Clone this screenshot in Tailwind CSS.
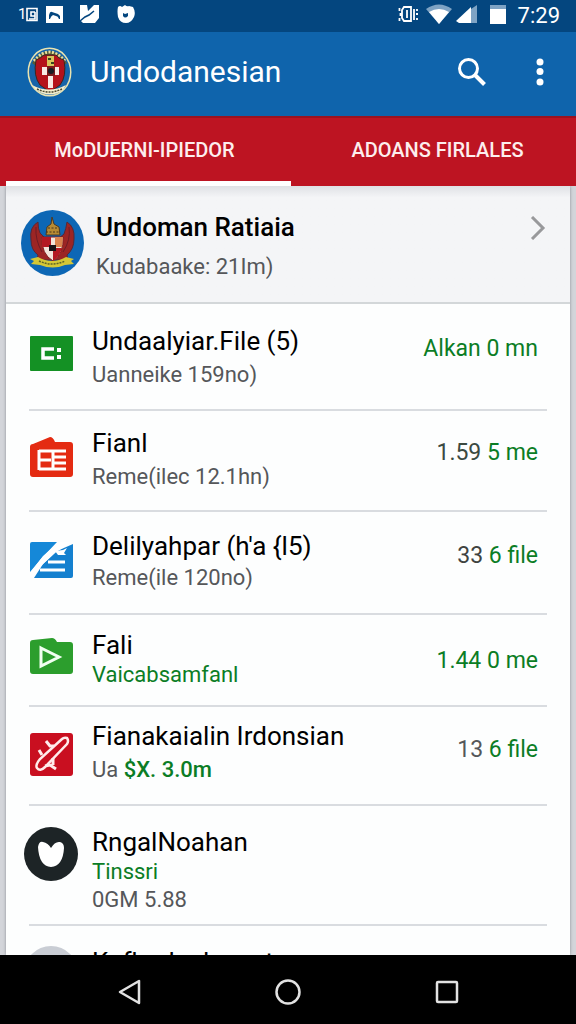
<!DOCTYPE html>
<html lang="id">
<head>
<meta charset="utf-8">
<meta name="viewport" content="width=device-width, initial-scale=1">
<title>Undodanesian</title>
<script src="https://cdn.jsdelivr.net/npm/@tailwindcss/browser@4"></script>
</head>
<body class="flex h-screen flex-col overflow-hidden bg-[#d3d5da] font-[Roboto,'Liberation_Sans',sans-serif] text-black">

<!-- Status bar -->
<div class="flex h-8 shrink-0 items-center bg-[#04467f] pr-4 pb-1 pl-[18px] text-white">
  <div class="flex flex-1 items-center">
    <span class="text-[15px] leading-5">1</span>
    <svg class="h-5 w-3" viewBox="0 0 12 20" fill="none" stroke="#fff" stroke-width="1.6"><path d="M11 4.500H1v12h10z"/><path d="M9 8H5v4h4v3H3M9 8v7"/></svg>
    <svg class="ml-2 h-5 w-[17px]" viewBox="0 0 17 20"><path fill="#fff" d="M0 2h17v17H0z"/><path fill="#04467f" d="M3 15v-4q1-4 3-3l6 2 2 2v3h-1q-1-3-3-3l-3-1q-2 1-3 4z"/></svg>
    <svg class="ml-4 h-5 w-5" viewBox="0 0 20 20"><path fill="#fff" d="M1 1h7l1 6 6-6h5v13l-4 5H4l-3-3z"/><path d="M1 17l5-4 4-2 5-4" stroke="#04467f" stroke-width="1.6" fill="none"/></svg>
    <svg class="ml-[18px] h-5 w-[18px]" viewBox="0 0 18 20"><path fill="#fff" d="M1 3q2-2 4 0l3-2q2 2 4 1l4 1q3 5 1 10-3 6-8 6-6 0-8-6-1-6 0-10z"/><path fill="#04467f" d="M6 9l2 1 3-1v3q-3 3-5 0z"/></svg>
  </div>
  <svg class="h-5 w-5" viewBox="0 0 20 20" fill="none" stroke="#fff" stroke-width="1.8"><path d="M6 3h7v14H6l-2-3V6zM9 6v8M1.500 4v3M2.500 9v3M1.500 14v3M16 5v11M19 5v2M18 10h2M19 14v2"/></svg>
  <svg class="ml-2 h-5 w-[26px]" viewBox="0 0 26 20"><path fill="#7fa3c4" d="M0 5q13-9 26 0L13 20z"/><path fill="#fff" d="M3 8q10-6 20 0L13 20z"/></svg>
  <svg class="ml-1 h-5 w-[22px]" viewBox="0 0 22 20"><path fill="#7fa3c4" d="M15 5l6-4v18h-6z"/><path fill="#fff" d="M0 17L15 3v16H3z"/></svg>
  <svg class="ml-3 h-5 w-4" viewBox="0 0 16 20"><path fill="#7fa3c4" d="M0 1h16v5H0z"/><path fill="#fff" d="M0 5h16v15H0z"/></svg>
  <span class="ml-3 pt-1 text-[22px] leading-6">7:29</span>
</div>

<!-- App bar -->
<header class="flex h-[84px] shrink-0 items-center bg-[#0f64ac] pr-4 pb-1 pl-[27px] text-white">
  <svg class="h-[50px] w-[45px]" viewBox="0 0 45 50">
    <ellipse cx="22.500" cy="25" rx="22" ry="24.500" fill="#e9e3b0"/>
    <ellipse cx="22.500" cy="25" rx="20.500" ry="23" fill="#1764a8"/>
    <path d="M5 16Q22-8 40 16l-4 3Q22 4 9 19z" fill="#5a5c35"/>
    <path d="M7 14Q22-4 38 14" fill="none" stroke="#eadf9c" stroke-width="3" stroke-dasharray="2 1.500"/>
    <path d="M9 13q5-2 8-5h12q3 4 8 5 3 16-4 25l-10 7-10-7Q6 29 9 13z" fill="#b5121b" stroke="#3c2620"/>
    <path d="M20 9h7v10h-7z" fill="#d8c45c"/><path d="M21 11h3v2h-3zm3 4h3v2h-3z" fill="#36451e"/>
    <path d="M21 28h5v13h-5z" fill="#f8e9e4"/>
    <path d="M15 20h17v8H15z" fill="#f8e9e4"/>
    <path d="M20 19h8v10h-8z" fill="#7a1a1c"/><circle cx="24" cy="24" r="3" fill="#171a22"/>
    <path d="M5 38q17 9 34 0l-3 5q-13 9-27 0z" fill="#f5efcf"/><path d="M10 42q12 6 25 0" fill="none" stroke="#4b4a32" stroke-width="1.500" stroke-dasharray="2 1"/>
  </svg>
  <h1 class="ml-[18px] flex-1 text-[30px] leading-10">Undodanesian</h1>
  <button type="button" aria-label="Search" class="flex h-12 w-12 items-center justify-center">
    <svg class="h-7 w-7" viewBox="0 0 28 28" fill="none" stroke="#fff" stroke-width="3"><circle cx="10.500" cy="10.500" r="9"/><path d="M17 17l9.500 9.500" stroke-width="4"/></svg>
  </button>
  <button type="button" aria-label="More options" class="ml-6 flex h-12 w-10 items-center justify-center">
    <svg class="h-7 w-2" viewBox="0 0 8 28" fill="#fff"><circle cx="4" cy="4" r="3.500"/><circle cx="4" cy="13.500" r="3.500"/><circle cx="4" cy="24" r="3.500"/></svg>
  </button>
</header>

<!-- Tabs -->
<nav role="tablist" class="relative z-10 flex h-[70px] shrink-0 border-t-2 border-[#9b1220] bg-[#bd1422] pl-[6px] text-xl font-medium text-[#fdeeee]">
  <button type="button" role="tab" aria-selected="true" class="flex-1 border-b-5 border-white pr-2">MoDUERNI-IPIEDOR</button>
  <button type="button" role="tab" aria-selected="false" class="flex-1 border-b-5 border-transparent pl-2">ADOANS FIRLALES</button>
</nav>

<!-- File list -->
<main class="mx-[6px] min-h-0 flex-1 overflow-hidden bg-[#fdfefe] shadow-[0_0_3px_#8a8d94]">
  <a href="#profile" class="flex h-[118px] items-start border-b-2 border-[#d3d7d9] bg-[#f4f5f7] bg-linear-to-b from-[#dfe1e5] to-[#f4f5f7] to-10% pr-6 pl-[15px]">
    <svg class="mt-6 h-[66px] w-[63px] shrink-0" viewBox="0 0 63 66">
      <ellipse cx="31.500" cy="33" rx="31.500" ry="33" fill="#0d67b5"/>
      <path d="M17 12q-9 5-7 18 0 10 7 15l-1 5h31l-1-5q7-6 7-16 1-12-7-17-1 7-3 12l-6 5H25l-6-6q-2-4-2-11z" fill="#9c2524" stroke="#582836"/>
      <path d="M15 17q-1 13 6 25M48 17q2 13-6 25" fill="none" stroke="#6d1b24"/>
      <path d="M25 25l1-8 4-3 1-7 2 7 5 3 1 8z" fill="#b88b32" stroke="#4d3820"/><path d="M25 22h14M27 18h10" stroke="#49351c" stroke-dasharray="2 1.500"/>
      <path d="M21 27h21q1 17-10 24-12-7-11-24z" fill="#f2e5da" stroke="#7c1b1b"/>
      <path d="M21 27h9v10H21zM32 38h9q-2 8-9 13z" fill="#b31922"/><path d="M34 27h8l-1 10h-7z" fill="#d9834e"/><path d="M28 35h7v6h-7z" fill="#181316"/>
      <path d="M9 49l8-2q14 8 28 0l8 2-3 2 3 3-9 1q-12 5-25 0l-9-1 3-3z" fill="#d5c735"/><path d="M18 51q13 6 26 0" fill="none" stroke="#5d6429" stroke-width="1.500" stroke-dasharray="2 1"/>
    </svg>
    <div class="ml-3 flex-1 pt-[25px]">
      <h2 class="text-[26px] leading-8 font-medium">Undoman Ratiaia</h2>
      <p class="pt-2 text-[22px] leading-8 text-[#55575a]">Kudabaake: 21Im)</p>
    </div>
    <svg class="mt-[30px] h-6 w-4" viewBox="0 0 16 24" fill="none" stroke="#98999b" stroke-width="3"><path d="M2 1l11 11L2 23"/></svg>
  </a>

  <ul class="px-[23px] text-[22px] text-[#55575a]">
    <li class="flex h-[107px] items-start border-b-2 border-[#d9dce0] pt-[21px] pr-[9px]">
      <svg class="mt-2 h-11 w-11 shrink-0" viewBox="0 0 44 44"><rect x="1" y="3" width="43" height="35" rx="1" fill="#149124"/><path d="M25 16H14v9h11" fill="none" stroke="#fff" stroke-width="3.500"/><path d="M28 15h4v4h-4zm0 7h4v4h-4z" fill="#fff"/></svg>
      <div class="ml-[19px] flex-1"><h3 class="text-[26px] leading-8 text-black">Undaalyiar.File (5)</h3><p class="leading-9">Uanneike 159no)</p></div>
      <span class="mt-2 text-[23px] leading-8 text-[#0b7d25]">Alkan 0 mn</span>
    </li>
    <li class="flex h-[101px] items-start border-b-2 border-[#d9dce0] pt-4 pr-[9px]">
      <svg class="mt-2 h-11 w-11 shrink-0" viewBox="0 0 44 44"><path d="M1 12q0-3 3-3l17-7q3 0 5 5h15q3 0 3 3v29q0 3-3 3H4q-3 0-3-3z" fill="#e42b12"/><path d="M10 16h27M10 34h27M10 15v20M24 16v18M24 22h13M24 28h13M10 25h12" fill="none" stroke="#fff" stroke-width="3"/></svg>
      <div class="ml-[19px] flex-1"><h3 class="text-[26px] leading-8 text-black">Fianl</h3><p class="leading-9">Reme(ilec 12.1hn)</p></div>
      <span class="mt-[10px] text-[23px] leading-8 text-[#0b7d25]"><span class="text-[#3b4a41]">1.59</span> 5 me</span>
    </li>
    <li class="flex h-[103px] items-start border-b-2 border-[#d9dce0] pt-[18px] pr-[9px]">
      <svg class="mt-2 h-11 w-11 shrink-0" viewBox="0 0 44 44"><path d="M1 6q0-2 2-2h25L12 21 1 34z" fill="#1588d8"/><path d="M44 6v32q0 2-2 2H5l9-14L28 13z" fill="#1480cf"/><path d="M30 4h12l-5 4-10 6L13 27 4 39H1v-4L14 18z" fill="#fff"/><path d="M26 13l8-1 4-2-3 5 2 2h-8" fill="#fff"/><path d="M19 24h17M11 32h25" fill="none" stroke="#fff" stroke-width="3"/></svg>
      <div class="ml-[19px] flex-1"><h3 class="text-[26px] leading-8 text-black">Delilyahpar (h'a {l5)</h3><p class="leading-8">Reme(ile 120no)</p></div>
      <span class="mt-[10px] text-[23px] leading-8 text-[#0b7d25]"><span class="text-[#3f4341]">33</span> 6 file</span>
    </li>
    <li class="flex h-[92px] items-start border-b-2 border-[#d9dce0] pt-[14px] pr-[9px]">
      <svg class="mt-2 h-11 w-11 shrink-0" viewBox="0 0 44 44"><path d="M1 6q0-3 3-3l19-2q3 0 5 4h13q3 0 3 3v26q0 3-3 3H4q-3 0-3-3z" fill="#2c9e2d"/><path d="M12 11l18 9-18 9z" fill="none" stroke="#f1fff1" stroke-width="3"/></svg>
      <div class="ml-[19px] flex-1"><h3 class="text-[26px] leading-8 text-black">Fali</h3><p class="leading-7 text-[#0b7d25]">Vaicabsamfanl</p></div>
      <span class="mt-4 text-[23px] leading-8 text-[#0b7d25]">1.44 0 me</span>
    </li>
    <li class="flex h-[99px] items-start border-b-2 border-[#d9dce0] pt-[13px] pr-[9px]">
      <svg class="mt-3 h-11 w-11 shrink-0" viewBox="0 0 44 44"><rect x="1" y="1" width="43" height="43" rx="3" fill="#c90f20"/><path d="M38 6q-3-1-5 1L11 27q-5 6-3 9 3 4 8-1l22-23q2-3 0-6z" fill="none" stroke="#ffecec" stroke-width="2.500"/><path d="M17 9l4 5 4 0M10 18l3 5M16 34l5-1 6 4M24 26v7" fill="none" stroke="#ffecec" stroke-width="3"/></svg>
      <div class="ml-[19px] flex-1"><h3 class="text-[26px] leading-8 text-black">Fianakaialin Irdonsian</h3><p class="leading-9">Ua <span class="font-medium text-[#0b7d25]">$X. 3.0m</span></p></div>
      <span class="mt-[14px] text-[23px] leading-8 text-[#0b7d25]"><span class="text-[#55575a]">13</span> 6 file</span>
    </li>
    <li class="flex h-[120px] items-start border-b-2 border-[#d9dce0] pt-5 pr-[9px]">
      <span class="flex w-11 shrink-0 justify-center"><svg class="h-[56px] w-[54px] shrink-0" viewBox="0 0 54 56"><circle cx="27" cy="28" r="27" fill="#1d2426"/><path d="M27 22q4-7 9-6 4 1 4 6-1 18-13 19-12-1-13-20 1-6 5-5 5 1 8 6z" fill="#fff"/></svg></span>
      <div class="ml-[19px] flex-1"><h3 class="text-[26px] leading-8 text-black">RngalNoahan</h3><p class="leading-7 text-[#0b7d25]">Tinssri</p><p class="leading-7">0GM 5.88</p></div>
    </li>
    <li class="flex items-start pt-5 pr-[9px]">
      <span class="flex w-11 shrink-0 justify-center"><span class="h-[54px] w-[54px] shrink-0 rounded-full bg-[#c9cdd4]"></span></span>
      <div class="ml-[19px] flex-1"><h3 class="text-[26px] leading-8 text-black">Kafhadanlauset</h3></div>
    </li>
  </ul>
</main>

<!-- System navigation -->
<nav class="flex h-[69px] shrink-0 items-center justify-between bg-black px-[105px] pt-1">
  <button type="button" aria-label="Back" class="flex h-12 w-12 items-center justify-center"><svg class="h-7 w-7" viewBox="0 0 28 28" fill="none" stroke="#e2e2e2" stroke-width="2.500" stroke-linejoin="round"><path d="M24 3v22L5 14z"/></svg></button>
  <button type="button" aria-label="Home" class="flex h-12 w-12 items-center justify-center"><svg class="h-7 w-7" viewBox="0 0 28 28" fill="none" stroke="#e2e2e2" stroke-width="2.500"><circle cx="14" cy="14" r="11.500"/></svg></button>
  <button type="button" aria-label="Recent apps" class="flex h-12 w-12 items-center justify-center"><svg class="h-7 w-7" viewBox="0 0 28 28" fill="none" stroke="#e2e2e2" stroke-width="2.500"><rect x="4" y="4" width="20" height="20" rx="1"/></svg></button>
</nav>
</body>
</html>
